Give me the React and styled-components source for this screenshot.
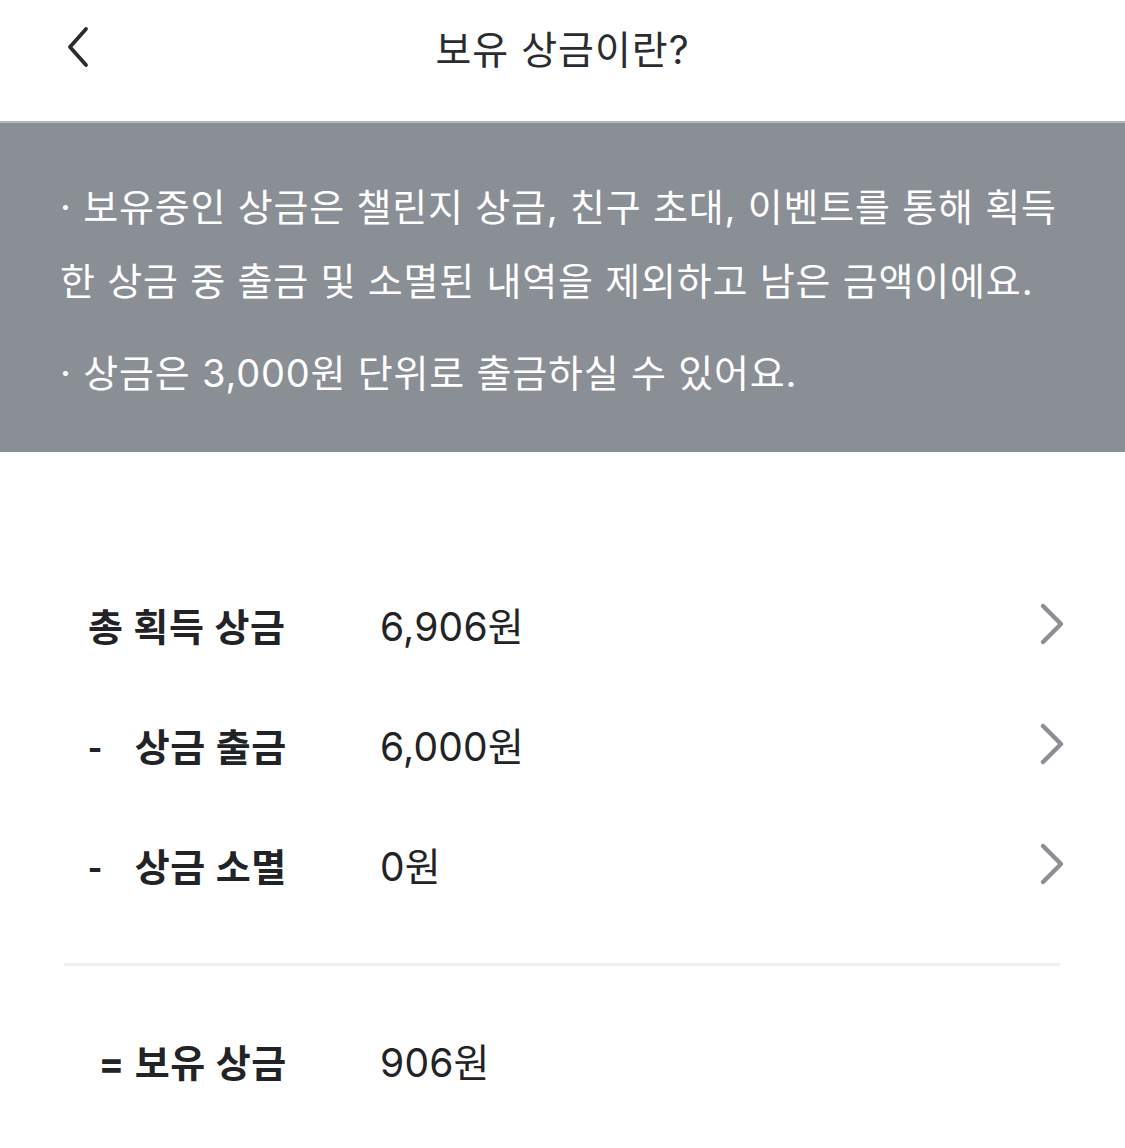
import React from 'react';
import styled, { createGlobalStyle } from 'styled-components';

const GlobalStyle = createGlobalStyle`
  html, body {
    margin: 0;
    padding: 0;
    background: #ffffff;
  }
  body {
    font-family: Inter, 'Noto Sans CJK KR', 'Noto Sans', sans-serif;
    -webkit-font-smoothing: antialiased;
  }
`;

const Page = styled.div`
  width: 1125px;
  min-height: 1148px;
  background: #ffffff;
`;

const Header = styled.header`
  position: relative;
  height: 123px;
  display: flex;
  align-items: center;
  justify-content: center;
  border-bottom: 2px solid #b4b7bc;
  padding-bottom: 28px;
  box-sizing: border-box;
`;

const BackButton = styled.button`
  position: absolute;
  left: 60px;
  top: 24px;
  width: 36px;
  height: 46px;
  padding: 0;
  border: none;
  background: none;
  display: flex;
  align-items: center;
  justify-content: center;
  cursor: pointer;
`;

const Title = styled.h1`
  margin: 0;
  font-size: 39px;
  font-weight: 400;
  color: #2b2c2f;
  letter-spacing: 1px;
`;

const Notice = styled.section`
  background: #8a8e95;
  padding: 47px 60px 42px;
`;

const NoticeText = styled.p`
  margin: 0;
  color: #ffffff;
  font-size: 38px;
  line-height: 74px;
  letter-spacing: 0.8px;
  white-space: nowrap;

  & + & {
    margin-top: 18px;
  }
`;

const Summary = styled.section`
  padding: 112px 60px 0 88px;
`;

const Row = styled.div`
  display: flex;
  align-items: center;
  height: 120px;
`;

const Label = styled.div`
  width: 199px;
  display: flex;
  justify-content: ${p => (p.$total ? 'flex-end' : 'space-between')};
  font-size: 38px;
  font-weight: 700;
  color: #222326;
  letter-spacing: 0.7px;
  white-space: nowrap;
`;

const Dash = styled.span`
  font-family: 'Noto Sans CJK KR', sans-serif;
`;

const Value = styled.div`
  flex: 1;
  margin-left: 93px;
  font-size: 39px;
  font-weight: 400;
  color: #222326;
  letter-spacing: 0.2px;
`;

const Arrow = styled.div`
  width: 26px;
  display: flex;
  justify-content: flex-end;
`;

const Divider = styled.hr`
  margin: 39px 5px 34px -24px;
  border: none;
  height: 3px;
  border-radius: 2px;
  background: #eeeff1;
`;

const ChevronLeft = () => (
  <svg width="26" height="42" viewBox="0 0 26 42" fill="none">
    <path d="M21 3 L5 21 L21 39" stroke="#2b2c2f" strokeWidth="3.8" strokeLinecap="round" strokeLinejoin="round" />
  </svg>
);

const ChevronRight = () => (
  <svg width="26" height="44" viewBox="0 0 26 44" fill="none">
    <path d="M4 4 L22 22 L4 40" stroke="#8b8f95" strokeWidth="4.4" strokeLinecap="round" strokeLinejoin="round" />
  </svg>
);

const rows = [
  { dash: false, text: '총 획득 상금', value: '6,906원' },
  { dash: true, text: '상금 출금', value: '6,000원' },
  { dash: true, text: '상금 소멸', value: '0원' },
];

export default function App() {
  return (
    <Page>
      <GlobalStyle />
      <Header>
        <BackButton aria-label="뒤로">
          <ChevronLeft />
        </BackButton>
        <Title>보유 상금이란?</Title>
      </Header>
      <Notice>
        <NoticeText>
          · 보유중인 상금은 챌린지 상금, 친구 초대, 이벤트를 통해 획득
          <br />
          한 상금 중 출금 및 소멸된 내역을 제외하고 남은 금액이에요.
        </NoticeText>
        <NoticeText>· 상금은 3,000원 단위로 출금하실 수 있어요.</NoticeText>
      </Notice>
      <Summary>
        {rows.map(row => (
          <Row key={row.value}>
            <Label>
              {row.dash && <Dash>-</Dash>}
              <span>{row.text}</span>
            </Label>
            <Value>{row.value}</Value>
            <Arrow>
              <ChevronRight />
            </Arrow>
          </Row>
        ))}
        <Divider />
        <Row>
          <Label $total>= 보유 상금</Label>
          <Value>906원</Value>
        </Row>
      </Summary>
    </Page>
  );
}
